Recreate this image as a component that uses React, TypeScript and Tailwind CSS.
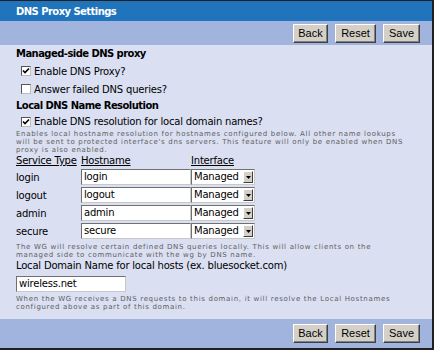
import React from "react";

const font = { fontFamily: '"DejaVu Sans", Verdana, sans-serif' };

function Btn({ label, w }: { label: string; w: string }) {
  return (
    <button
      className={`${w} h-[19px] bg-[#d4d0c8] text-black text-[11px] leading-none border border-t-white border-l-white border-r-[#404040] border-b-[#404040] shadow-[inset_-1px_-1px_0_#808080]`}
      style={{ fontFamily: '"Liberation Sans", Arial, sans-serif' }}
    >
      {label}
    </button>
  );
}

function Check({ on, label }: { on: boolean; label: string }) {
  return (
    <div className="flex items-center">
      <span className="ml-[5px] w-[10px] h-[10px] bg-white border border-t-[#555] border-l-[#555] border-r-[#bbb] border-b-[#bbb] flex items-center justify-center">
        {on && (
          <svg width="8" height="8" viewBox="0 0 8 8">
            <path d="M1 3.5 L3 5.5 L7 1.5" stroke="#000" strokeWidth="1.6" fill="none" />
          </svg>
        )}
      </span>
      <span className="ml-[3px]">{label}</span>
    </div>
  );
}

function Field({ value, w }: { value: string; w: string }) {
  return (
    <div
      className={`${w} h-[16px] bg-white border border-t-[#707070] border-l-[#707070] border-r-[#c8c8c8] border-b-[#c8c8c8] pl-[2px] text-[10px] leading-[14px] text-black`}
    >
      {value}
    </div>
  );
}

function Select() {
  return (
    <div className="w-[64px] h-[16px] bg-white border border-t-[#707070] border-l-[#707070] border-r-[#c8c8c8] border-b-[#c8c8c8] flex items-center justify-between pl-[2px] pr-[1px]">
      <span className="text-[10px] leading-[14px]">Managed</span>
      <span className="w-[10px] h-[12px] bg-[#d4d0c8] border border-t-white border-l-white border-r-[#404040] border-b-[#404040] flex items-center justify-center">
        <svg width="5" height="3" viewBox="0 0 5 3">
          <path d="M0 0 H5 L2.5 3 Z" fill="#000" />
        </svg>
      </span>
    </div>
  );
}

const rows = ["login", "logout", "admin", "secure"];

export default function App() {
  return (
    <div
      className="w-[434px] h-[350px] flex flex-col overflow-hidden border-t border-r-2 border-b-2 border-[#202020] text-black"
      style={font}
    >
      {/* title */}
      <div className="h-[20px] shrink-0 bg-[#1f74bc] text-white font-bold text-[10px] tracking-[-0.55px] pl-[16px] flex items-center">
        DNS Proxy Settings
      </div>

      {/* toolbar */}
      <div className="h-[24px] shrink-0 bg-[#a1b4de] flex justify-end items-center gap-[7px] pr-[12px]">
        <Btn label="Back" w="w-[35px]" />
        <Btn label="Reset" w="w-[41px]" />
        <Btn label="Save" w="w-[37px]" />
      </div>

      {/* content */}
      <div className="flex-1 bg-[#dadff2] pl-[16px] pt-[1px] text-[10px] tracking-[-0.2px]">
        <div className="h-[16px] leading-[16px] font-bold tracking-[-0.55px]">Managed-side DNS proxy</div>
        <div className="h-[18px] flex items-center">
          <Check on label="Enable DNS Proxy?" />
        </div>
        <div className="h-[18px] flex items-center">
          <Check on={false} label="Answer failed DNS queries?" />
        </div>
        <div className="h-[15px] leading-[15px] font-bold tracking-[-0.55px]">Local DNS Name Resolution</div>
        <div className="h-[17px] flex items-center">
          <Check on label="Enable DNS resolution for local domain names?" />
        </div>
        <p className="text-[7px] leading-[8px] text-[#606060] tracking-[0.68px] whitespace-nowrap">
          Enables local hostname resolution for hostnames configured below. All other name lookups
          <br />
          will be sent to protected interface's dns servers. This feature will only be enabled when DNS
          <br />
          proxy is also enabled.
        </p>

        <div className="h-[14px] leading-[14px] flex underline">
          <span className="w-[65px]">Service Type</span>
          <span className="w-[110px]">Hostname</span>
          <span>Interface</span>
        </div>
        {rows.map((r) => (
          <div key={r} className="h-[18px] flex items-center">
            <span className="w-[65px]">{r}</span>
            <Field value={r} w="w-[110px]" />
            <Select />
          </div>
        ))}

        <p className="mt-[3px] text-[7px] leading-[8px] text-[#606060] tracking-[0.68px] whitespace-nowrap">
          The WG will resolve certain defined DNS queries locally. This will allow clients on the
          <br />
          managed side to communicate with the wg by DNS name.
        </p>
        <div className="h-[14px] leading-[14px]">
          Local Domain Name for local hosts (ex. bluesocket.com)
        </div>
        <div className="mt-[3px]">
          <Field value="wireless.net" w="w-[110px]" />
        </div>
        <p className="mt-[3px] text-[7px] leading-[8px] text-[#606060] tracking-[0.68px] whitespace-nowrap">
          When the WG receives a DNS requests to this domain, it will resolve the Local Hostnames
          <br />
          configured above as part of this domain.
        </p>
      </div>

      {/* footer */}
      <div className="h-[29px] shrink-0 bg-[#a1b4de] flex justify-end items-center gap-[7px] pr-[12px]">
        <Btn label="Back" w="w-[35px]" />
        <Btn label="Reset" w="w-[41px]" />
        <Btn label="Save" w="w-[37px]" />
      </div>
    </div>
  );
}
